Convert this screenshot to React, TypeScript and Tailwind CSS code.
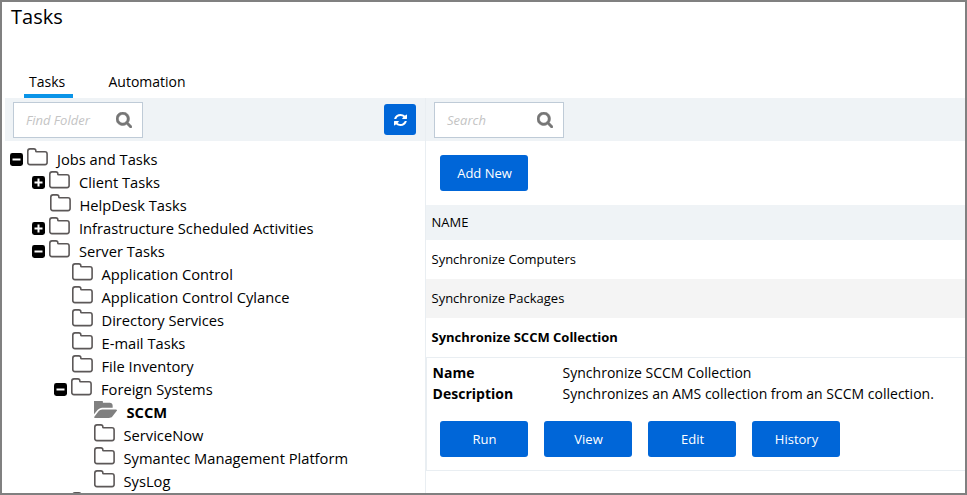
import React from "react";

type Toggle = "plus" | "minus" | null;
type Node = { label: string; indent: string; toggle: Toggle; open?: boolean };

const L0 = "pl-[8px]";
const L1 = "pl-[30px]";
const L2 = "pl-[52px]";
const L3 = "pl-[74px]";

const nodes: Node[] = [
  { label: "Jobs and Tasks", indent: L0, toggle: "minus" },
  { label: "Client Tasks", indent: L1, toggle: "plus" },
  { label: "HelpDesk Tasks", indent: L1, toggle: null },
  { label: "Infrastructure Scheduled Activities", indent: L1, toggle: "plus" },
  { label: "Server Tasks", indent: L1, toggle: "minus" },
  { label: "Application Control", indent: L2, toggle: null },
  { label: "Application Control Cylance", indent: L2, toggle: null },
  { label: "Directory Services", indent: L2, toggle: null },
  { label: "E-mail Tasks", indent: L2, toggle: null },
  { label: "File Inventory", indent: L2, toggle: null },
  { label: "Foreign Systems", indent: L2, toggle: "minus" },
  { label: "SCCM", indent: L3, toggle: null, open: true },
  { label: "ServiceNow", indent: L3, toggle: null },
  { label: "Symantec Management Platform", indent: L3, toggle: null },
  { label: "SysLog", indent: L3, toggle: null },
];

function SearchIcon() {
  return (
    <svg viewBox="64 128 1664 1664" className="h-4 w-4 shrink-0 fill-[#767676] stroke-[#767676]" strokeWidth="50">
      <path d="M1216 832q0-185-131.5-316.5t-316.5-131.5-316.5 131.5-131.5 316.5 131.5 316.5 316.5 131.5 316.5-131.5 131.5-316.5zm512 832q0 52-38 90t-90 38q-54 0-90-38l-343-342q-179 124-399 124-143 0-273.5-55.5t-225-150-150-225-55.5-273.5 55.5-273.5 150-225 225-150 273.5-55.5 273.5 55.5 225 150 150 225 55.5 273.5q0 220-124 399l343 343q37 37 37 90z" />
    </svg>
  );
}

function RefreshIcon() {
  return (
    <svg viewBox="128 128 1536 1536" preserveAspectRatio="none" className="h-[12px] w-[13px] fill-white">
      <path d="M1639 1056q0 5-1 7-64 268-268 434.5t-478 166.5q-146 0-282.5-55t-243.5-157l-129 129q-19 19-45 19t-45-19-19-45v-448q0-26 19-45t45-19h448q26 0 45 19t19 45-19 45l-137 137q71 66 161 102t187 36q134 0 250-65t186-179q11-17 53-117 8-23 30-23h192q13 0 22.5 9.5t9.5 22.5zm25-800v448q0 26-19 45t-45 19h-448q-26 0-45-19t-19-45 19-45l138-138q-148-137-349-137-134 0-250 65t-186 179q-11 17-53 117-8 23-30 23h-199q-13 0-22.5-9.5t-9.5-22.5v-7q65-268 270-434.5t480-166.5q146 0 284 55.5t245 156.5l130-129q19-19 45-19t45 19 19 45z" />
    </svg>
  );
}

function Folder() {
  return (
    <svg viewBox="0 0 21 18" className="h-[18px] w-[21px] shrink-0 fill-none stroke-[#5c5858]" strokeWidth="1.6">
      <path d="M.8 3.2Q.8.9 3 .9H6.8Q8.8.9 8.8 2.6V3.3Q8.8 3.8 9.6 3.8H18Q20.1 3.8 20.1 6V14.6Q20.1 16.6 18 16.6H3Q.8 16.6 .8 14.6Z" />
    </svg>
  );
}

function OpenFolder() {
  return (
    <svg viewBox="0 256 1815 1280" preserveAspectRatio="none" className="h-[17px] w-[23px] shrink-0 fill-[#808080]">
      <path d="M1815 952q0 31-31 66l-336 396q-43 51-120.5 86.5t-143.5 35.5h-1088q-34 0-60.5-13t-26.5-43q0-31 31-66l336-396q43-51 120.5-86.5t143.5-35.5h1088q34 0 60.5 13t26.5 43zm-343-344v160h-832q-94 0-197 47.5t-164 119.5l-337 396-5 6q0-4-.5-12.5t-.5-12.5v-960q0-92 66-158t158-66h320q92 0 158 66t66 158v32h544q92 0 158 66t66 158z" />
    </svg>
  );
}

function ToggleBox({ kind }: { kind: Toggle }) {
  if (!kind) return <span className="h-[13px] w-[13px] shrink-0" />;
  return (
    <svg viewBox="0 0 13 13" className="mt-[5px] h-[13px] w-[13px] shrink-0">
      <rect width="13" height="13" rx="2.4" fill="#000" />
      <rect x="2.5" y="5.5" width="8" height="2" fill="#fff" />
      {kind === "plus" && <rect x="5.5" y="2.5" width="2" height="8" fill="#fff" />}
    </svg>
  );
}

function TreeRow({ node }: { node: Node }) {
  return (
    <li className={`flex h-[23px] shrink-0 items-start ${node.indent}`}>
      <ToggleBox kind={node.toggle} />
      <span className={`flex shrink-0 ${node.toggle ? "w-[34px] pl-[4px]" : "w-[34.5px] pl-[5px]"}`}>
        {node.open ? <OpenFolder /> : <Folder />}
      </span>
      <span className={`whitespace-nowrap text-[14.69px] leading-[23px] ${node.open ? "pl-[3px] font-bold" : ""}`}>
        {node.label}
      </span>
    </li>
  );
}

function SearchBox({ placeholder }: { placeholder: string }) {
  return (
    <div className="flex h-9 w-[130px] items-center justify-between border border-[#bfcbd7] bg-white pr-2.5 pl-3">
      <span className="pt-0.5 text-[13px] text-[#c4c4c4] italic">{placeholder}</span>
      <SearchIcon />
    </div>
  );
}

function Button({ children }: { children: React.ReactNode }) {
  return (
    <button className="h-9 w-[88px] rounded-[3px] bg-[#0066d8] pt-0.5 pl-px text-[13px] text-white">{children}</button>
  );
}

export default function App() {
  return (
    <div className="flex h-[495px] w-[967px] flex-col overflow-hidden border-2 border-[#808080] bg-white font-['Open_Sans',sans-serif] text-black">
      <h1 className="h-[68px] shrink-0 pl-[9px] text-[20px] leading-[30px]">Tasks</h1>
      <nav className="flex h-[28px] shrink-0 pl-[22px] text-[14px] leading-[24px]">
        <div className="w-[49px] border-b-4 border-[#0a94e8] pl-[5px]">Tasks</div>
        <div className="pl-[35.5px]">Automation</div>
      </nav>
      <main className="flex min-h-0 flex-1">
        <section className="ml-[3px] flex w-[420px] shrink-0 flex-col">
          <div className="flex h-[43px] shrink-0 items-start justify-between bg-[#eff3f6] pt-1 pr-[9px] pl-2">
            <SearchBox placeholder="Find Folder" />
            <button className="mt-[2px] flex h-[31px] w-8 items-center justify-center rounded-[3px] bg-[#0066d8]">
              <RefreshIcon />
            </button>
          </div>
          <ul className="-ml-[3px] flex min-h-0 flex-1 flex-col overflow-hidden pt-[7px]">
            {nodes.map((n) => (
              <TreeRow key={n.label} node={n} />
            ))}
            <li className="-mt-px shrink-0 pl-[70px]">
              <Folder />
            </li>
          </ul>
        </section>
        <section className="flex flex-1 flex-col border-l border-[#e9eef2]">
          <div className="h-[43px] shrink-0 bg-[#eff3f6] pt-1 pl-2">
            <SearchBox placeholder="Search" />
          </div>
          <div className="h-[64px] shrink-0 pt-[14px] pl-[14px]">
            <Button>Add New</Button>
          </div>
          <div className="h-[35px] shrink-0 bg-[#eff3f6] pl-[5.5px] text-[13px] leading-[35px]">NAME</div>
          <div className="h-[39px] shrink-0 pl-[5.5px] text-[13px] leading-[39px]">Synchronize Computers</div>
          <div className="h-[39px] shrink-0 bg-[#f4f4f4] pl-[5.5px] text-[13px] leading-[39px]">Synchronize Packages</div>
          <div className="h-[39px] shrink-0 pl-[5.5px] text-[13px] leading-[39px] font-bold">Synchronize SCCM Collection</div>
          <div className="h-[114px] shrink-0 border-y border-l border-[#e9eef2] pt-1 pl-[5px]">
            <dl className="grid grid-cols-[130px_1fr] pl-[0.6px] text-[14px] leading-[21px] whitespace-nowrap">
              <dt className="font-bold">Name</dt>
              <dd>Synchronize SCCM Collection</dd>
              <dt className="font-bold">Description</dt>
              <dd>Synchronizes an AMS collection from an SCCM collection.</dd>
            </dl>
            <div className="flex gap-4 pt-[17px] pl-2">
              <Button>Run</Button>
              <Button>View</Button>
              <Button>Edit</Button>
              <Button>History</Button>
            </div>
          </div>
        </section>
      </main>
    </div>
  );
}
